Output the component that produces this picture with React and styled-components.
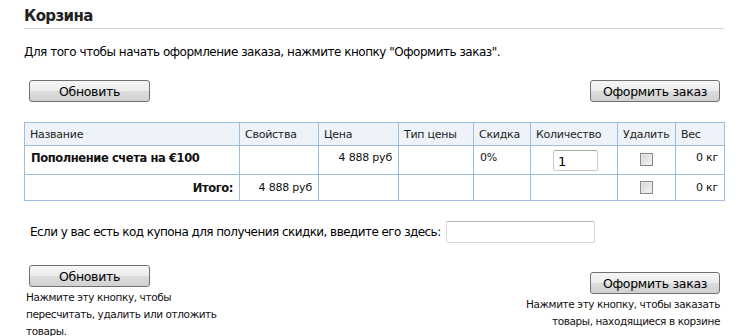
import React from 'react';
import styled, { createGlobalStyle } from 'styled-components';

const GlobalStyle = createGlobalStyle`
  body {
    margin: 0;
    background: #fff;
    font-family: "DejaVu Sans", Verdana, sans-serif;
    color: #000;
  }
`;

const Page = styled.div`
  width: 700px;
  padding: 0 0 0 24px;
  font-size: 12px;
`;

const Title = styled.h2`
  margin: 0;
  padding: 7px 0 3px;
  font-size: 15px;
  line-height: 18px;
  letter-spacing: -0.6px;
  font-weight: 700;
  color: #222;
  border-bottom: 1px solid #d0d0d0;
`;

const Intro = styled.p`
  margin: 15px 0 0;
  line-height: 16px;
  letter-spacing: -0.48px;
`;

const ButtonRow = styled.div`
  display: flex;
  justify-content: space-between;
  align-items: flex-start;
  margin-top: 20px;
  padding: 0 4px 0 5px;
`;

const Button = styled.button`
  width: ${(p) => p.$width}px;
  height: 22px;
  padding: 0;
  border: 1px solid #707070;
  border-radius: 3px;
  background: linear-gradient(#f6f6f6 0%, #ececec 50%, #dcdcdc 51%, #d2d2d2 100%);
  font-family: "DejaVu Sans", Verdana, sans-serif;
  font-size: 12.5px;
  letter-spacing: -0.3px;
  color: #000;
  cursor: pointer;
`;

const Cart = styled.table`
  width: 700px;
  margin-top: 20px;
  border-collapse: collapse;
  table-layout: fixed;
  font-size: 11px;
`;

const Row = styled.tr`
  height: ${(p) => p.$h}px;
`;

const Th = styled.th`
  padding: 0 5px;
  border: 1px solid #9dbedc;
  background: #eef3f9;
  font-weight: 400;
  text-align: left;
  letter-spacing: -0.25px;
  color: #222;
`;

const Td = styled.td`
  padding: ${(p) => (p.$valign === 'middle' ? '0 6px' : '5px 6px 0')};
  border: 1px solid #9dbedc;
  vertical-align: ${(p) => p.$valign || 'top'};
  text-align: ${(p) => p.$align || 'left'};
  font-weight: ${(p) => (p.$bold ? 700 : 400)};
  font-size: ${(p) => (p.$bold ? 11.5 : 11)}px;
  letter-spacing: ${(p) => (p.$bold ? -0.4 : -0.2)}px;
  line-height: 14px;
  color: #111;
`;

const QtyInput = styled.input`
  display: block;
  width: 45px;
  height: 21px;
  box-sizing: border-box;
  margin: 0 0 0 16px;
  padding: 2px 4px 0;
  border: 1px solid #c8c8c8;
  border-top-color: #a8a8a8;
  border-radius: 2px;
  font-family: "DejaVu Sans", Verdana, sans-serif;
  font-size: 13px;
  color: #000;
`;

const Check = styled.span`
  display: inline-block;
  vertical-align: middle;
  width: 11px;
  height: 11px;
  border: 1px solid #8a8a8a;
  background: linear-gradient(135deg, #d6d6d6, #f4f4f4);
  box-shadow: inset 0 0 0 1px #e8e8e8;
  margin-top: ${(p) => p.$top || 0}px;
`;

const Coupon = styled.div`
  display: flex;
  align-items: center;
  gap: 5px;
  margin-top: 20px;
  padding-left: 6px;
  font-size: 12px;
  letter-spacing: -0.55px;
`;

const CouponInput = styled.input`
  width: 149px;
  height: 22px;
  box-sizing: border-box;
  margin: 0;
  border: 1px solid #d8d8d8;
  border-top-color: #b8b8b8;
  border-radius: 2px;
`;

const Footer = styled.div`
  display: flex;
  justify-content: space-between;
  margin-top: 22px;
  padding: 0 4px 0 2px;
`;

const FooterCol = styled.div`
  display: flex;
  flex-direction: column;
  align-items: ${(p) => (p.$right ? 'flex-end' : 'flex-start')};
  padding-top: ${(p) => p.$top || 0}px;
  padding-left: ${(p) => (p.$right ? 0 : 3)}px;
`;

const Hint = styled.div`
  width: ${(p) => p.$width}px;
  margin-top: 2px;
  margin-left: ${(p) => (p.$right ? 0 : -3)}px;
  font-size: 10.5px;
  letter-spacing: -0.4px;
  line-height: 17px;
  color: #111;
  text-align: ${(p) => (p.$right ? 'right' : 'left')};
`;

const cols = [215, 79, 80, 75, 57, 87, 58, 49];

export default function App() {
  return (
    <Page>
      <GlobalStyle />
      <Title>Корзина</Title>
      <Intro>Для того чтобы начать оформление заказа, нажмите кнопку "Оформить заказ".</Intro>
      <ButtonRow>
        <Button $width={121}>Обновить</Button>
        <Button $width={130}>Оформить заказ</Button>
      </ButtonRow>
      <Cart>
        <colgroup>
          {cols.map((w, i) => (
            <col key={i} style={{ width: w }} />
          ))}
        </colgroup>
        <thead>
          <Row $h={23}>
            <Th>Название</Th>
            <Th>Свойства</Th>
            <Th>Цена</Th>
            <Th>Тип цены</Th>
            <Th>Скидка</Th>
            <Th>Количество</Th>
            <Th>Удалить</Th>
            <Th>Вес</Th>
          </Row>
        </thead>
        <tbody>
          <Row $h={29}>
            <Td $bold>Пополнение счета на €100</Td>
            <Td />
            <Td $align="right">4 888 руб</Td>
            <Td />
            <Td>0%</Td>
            <Td $valign="middle">
              <QtyInput defaultValue="1" />
            </Td>
            <Td $align="center" $valign="middle">
              <Check $top={-1} />
            </Td>
            <Td $align="right">0 кг</Td>
          </Row>
          <Row $h={26}>
            <Td $bold $align="right" $valign="middle">Итого:</Td>
            <Td $align="right" $valign="middle">4 888 руб</Td>
            <Td />
            <Td />
            <Td />
            <Td />
            <Td $align="center" $valign="middle">
              <Check />
            </Td>
            <Td $align="right" $valign="middle">0 кг</Td>
          </Row>
        </tbody>
      </Cart>
      <Coupon>
        Если у вас есть код купона для получения скидки, введите его здесь:
        <CouponInput />
      </Coupon>
      <Footer>
        <FooterCol>
          <Button $width={121}>Обновить</Button>
          <Hint $width={200}>Нажмите эту кнопку, чтобы пересчитать, удалить или отложить товары.</Hint>
        </FooterCol>
        <FooterCol $right $top={7}>
          <Button $width={130}>Оформить заказ</Button>
          <Hint $right $width={200}>Нажмите эту кнопку, чтобы заказать товары, находящиеся в корзине</Hint>
        </FooterCol>
      </Footer>
    </Page>
  );
}
